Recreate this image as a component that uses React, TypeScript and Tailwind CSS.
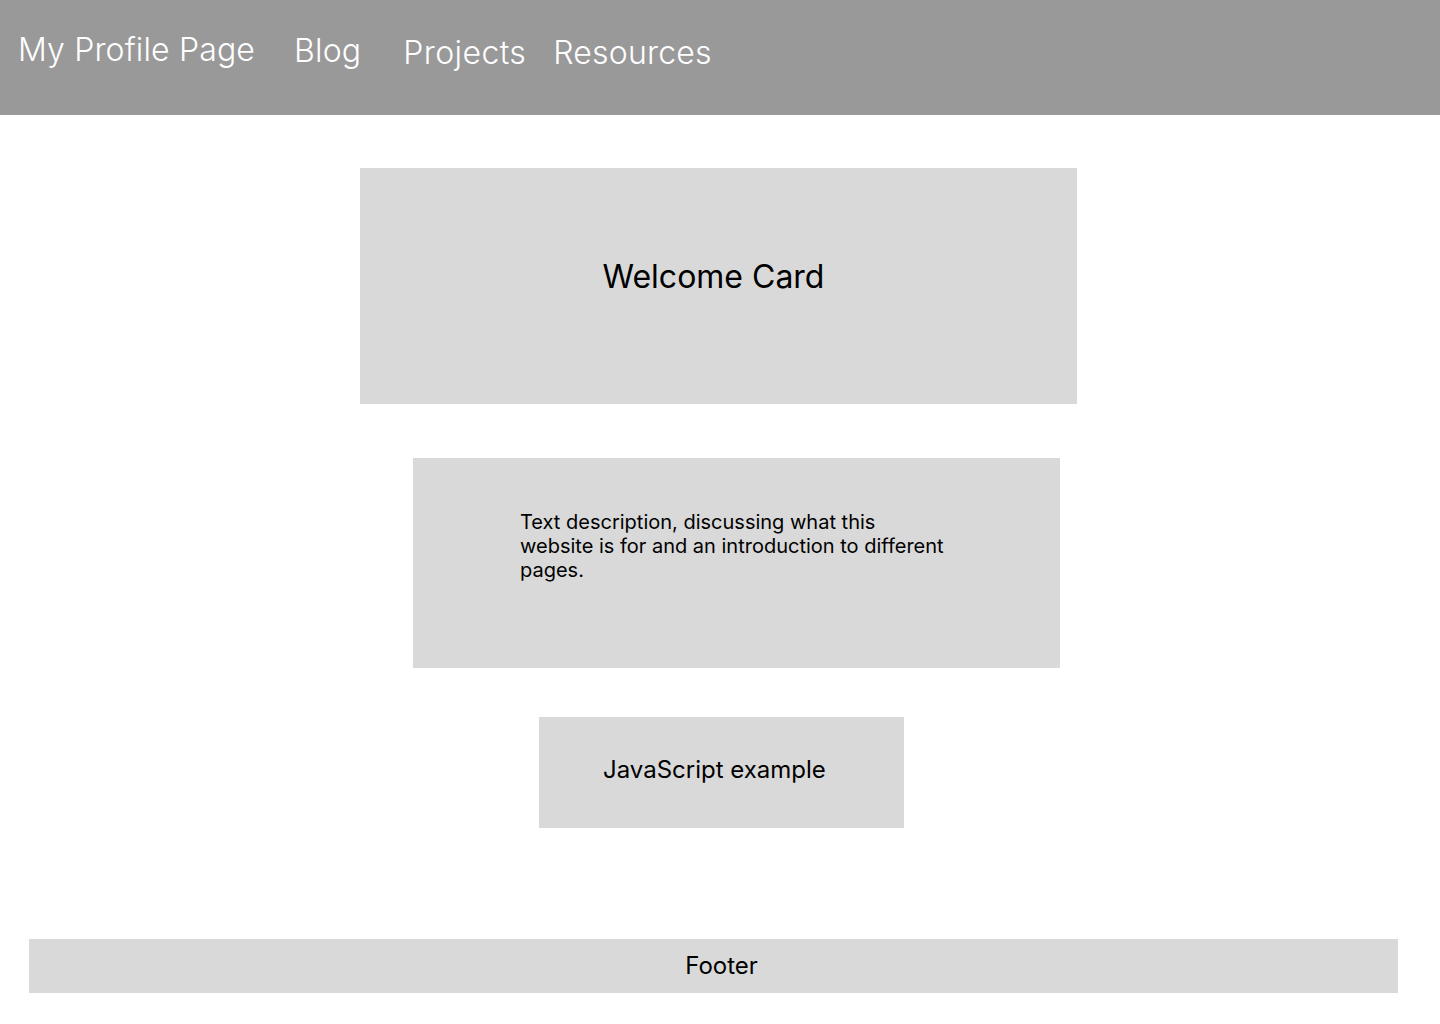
export default function App() {
  return (
    <div
      className="min-h-screen bg-white"
      style={{ fontFamily: 'Inter, "Noto Sans", sans-serif' }}
    >
      {/* Header */}
      <header className="h-[115px] bg-[#999999] text-white flex items-start">
        <span className="ml-[18px] mt-[30px] text-[32px] leading-[40px] font-light tracking-[0.15px]">
          My Profile Page
        </span>
        <span className="ml-[39px] mt-[31px] text-[32px] leading-[40px] font-light tracking-[0.2px]">Blog</span>
        <span className="ml-[42px] mt-[33px] text-[32px] leading-[40px] font-light tracking-[0.4px]">Projects</span>
        <span className="ml-[27px] mt-[33px] text-[32px] leading-[40px] font-light tracking-[0.2px]">Resources</span>
      </header>

      {/* Cards */}
      <main className="flex flex-col">
        <div className="ml-[360px] mt-[53px] w-[717px] h-[236px] bg-[#d9d9d9] flex justify-center pt-[89px] pr-[10px]">
          <span className="text-[32px] leading-[40px] text-black">Welcome Card</span>
        </div>

        <div className="ml-[413px] mt-[54px] w-[647px] h-[210px] bg-[#d9d9d9] pl-[107px] pt-[52px]">
          <p className="w-[431px] text-[20px] leading-[24px] text-black">
            Text description, discussing what this website is for and an introduction to different pages.
          </p>
        </div>

        <div className="ml-[539px] mt-[49px] w-[365px] h-[111px] bg-[#d9d9d9] pl-[64px] pt-[38px]">
          <span className="text-[24px] leading-[30px] text-black">JavaScript example</span>
        </div>

        <footer className="ml-[29px] mt-[111px] w-[1369px] h-[54px] bg-[#d9d9d9] flex items-center justify-center pl-[16px]">
          <span className="text-[24px] leading-[30px] text-black">Footer</span>
        </footer>
      </main>
    </div>
  );
}
